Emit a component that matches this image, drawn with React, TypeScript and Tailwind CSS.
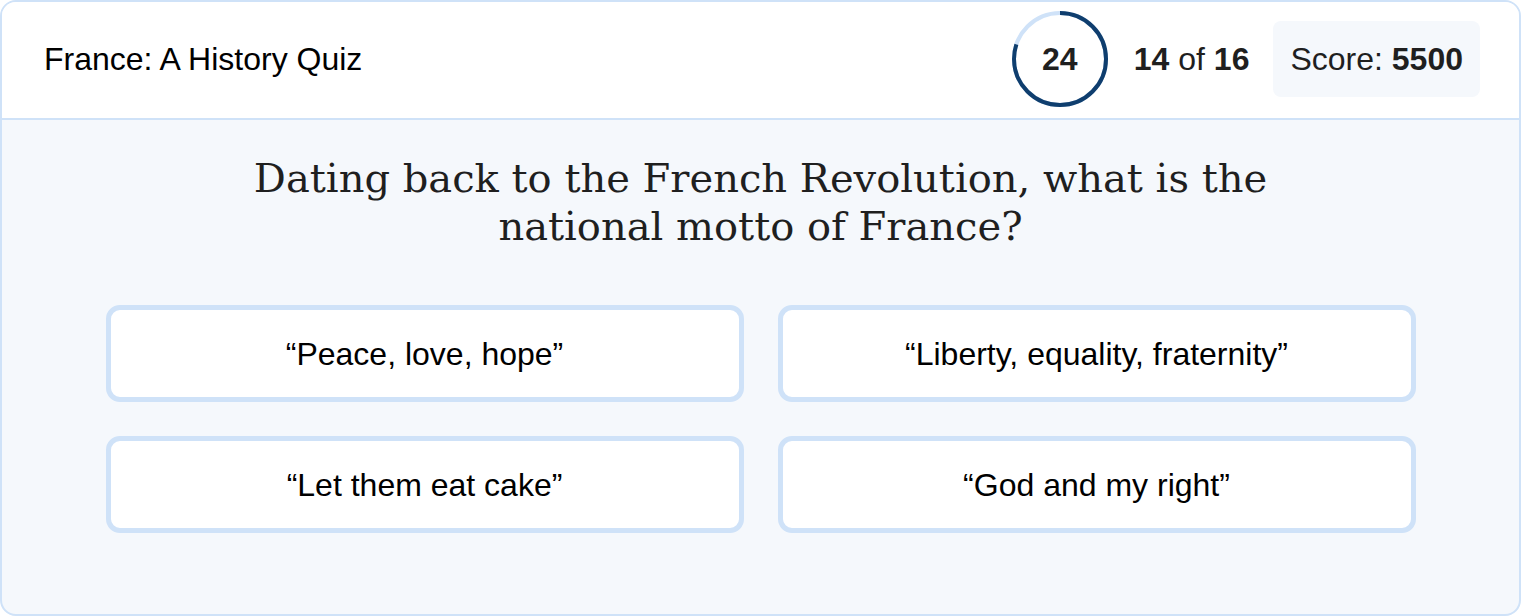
import React from "react";

const answers = [
  "“Peace, love, hope”",
  "“Liberty, equality, fraternity”",
  "“Let them eat cake”",
  "“God and my right”",
];

function Timer({ value, total }: { value: number; total: number }) {
  const r = 46;
  const c = 2 * Math.PI * r;
  const done = c * (value / total);
  return (
    <div className="relative w-[96px] h-[96px] flex items-center justify-center">
      <svg className="absolute inset-0" width="96" height="96" viewBox="0 0 96 96">
        <circle cx="48" cy="48" r={r} fill="none" stroke="#cfe2f8" strokeWidth="4" />
        <circle
          cx="48"
          cy="48"
          r={r}
          fill="none"
          stroke="#0f3e6e"
          strokeWidth="4"
          strokeDasharray={`${done} ${c}`}
          transform="rotate(-90 48 48)"
        />
      </svg>
      <span className="relative text-[32px] font-bold text-[#1f1f1f]">{value}</span>
    </div>
  );
}

export default function App() {
  return (
    <div className="min-h-screen bg-white font-['Liberation_Sans',Arial,sans-serif]">
      <div className="h-[616px] border-2 border-[#cfe2f8] rounded-2xl overflow-hidden flex flex-col bg-[#f5f8fc]">
        {/* Header */}
        <div className="h-[118px] shrink-0 bg-white border-b-2 border-[#cfe2f8] flex items-center justify-between pl-[42px] pr-[39px] pb-[3px]">
          <h1 className="text-[32px] text-black">France: A History Quiz</h1>
          <div className="flex items-center">
            <Timer value={24} total={30} />
            <div className="ml-[26px] text-[32px] text-[#1f1f1f]">
              <b>14</b> of <b>16</b>
            </div>
            <div className="ml-[24px] h-[76px] px-[17px] flex items-center rounded-lg bg-[#f5f8fc] text-[32px] text-[#1f1f1f]">
              Score:&nbsp;<b>5500</b>
            </div>
          </div>
        </div>

        {/* Question */}
        <div className="flex flex-col items-center pt-[34px]">
          <h2 className="max-w-[1080px] text-center font-['DejaVu_Serif',serif] text-[40px] leading-[48px] text-[#1f1f1f]">
            Dating back to the French Revolution, what is the national motto of France?
          </h2>
          <div className="mt-[55px] grid grid-cols-2 gap-[34px] w-[1310px]">
            {answers.map((a) => (
              <button
                key={a}
                className="h-[97px] bg-white border-[5px] border-[#cfe2f8] rounded-[14px] text-[32px] text-black"
              >
                {a}
              </button>
            ))}
          </div>
        </div>
      </div>
    </div>
  );
}
